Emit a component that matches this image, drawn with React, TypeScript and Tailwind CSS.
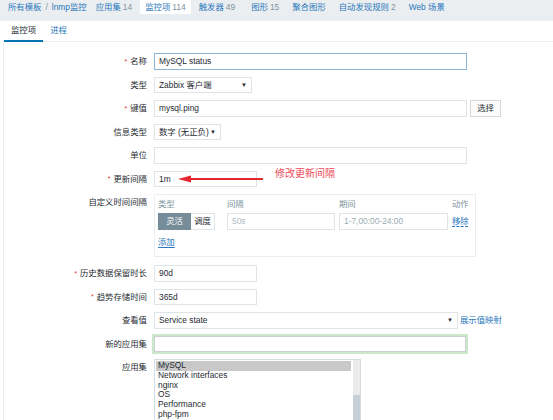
import React from 'react';

const LINK = 'text-[#2a78bd]';
const MUTED = 'text-[#7d939e]';

function Row({
  label,
  req,
  children,
  className = '',
}: {
  label: string;
  req?: boolean;
  children: React.ReactNode;
  className?: string;
}) {
  return (
    <div className={`flex items-start ${className}`}>
      <div className="flex h-[16.5px] w-[143px] shrink-0 items-center justify-end text-[#1f2c33]">
        {req && <span className="mr-[3px] text-[7px] leading-none text-[#e33734]">*</span>}
        <span className="leading-none">{label}</span>
      </div>
      <div className="relative ml-[7px] flex items-start">{children}</div>
    </div>
  );
}

function Input({ value, w, className = '' }: { value?: string; w: string; className?: string }) {
  return (
    <div className={`flex h-[16.5px] items-center border bg-white px-[4px] text-[#1f2c33] ${w} ${className || 'border-[#dfe4e7]'}`}>
      {value}
    </div>
  );
}

function Select({ value, w }: { value: string; w: string }) {
  return (
    <div className={`flex h-[16.5px] items-center justify-between border border-[#dfe4e7] bg-white pl-[4px] pr-[4px] text-[#1f2c33] ${w}`}>
      <span>{value}</span>
      <span className="text-[6px] leading-none text-[#1f2c33]">▼</span>
    </div>
  );
}

export default function App() {
  const navItem = 'flex h-[14px] items-center px-[5px]';
  const apps = ['MySQL', 'Network interfaces', 'nginx', 'OS', 'Performance', 'php-fpm'];

  return (
    <div className="h-[420px] overflow-hidden bg-white font-['Liberation_Sans','Noto_Sans_CJK_SC',sans-serif] text-[8.4px] leading-[14px]">
      {/* top navigation */}
      <div className="flex h-[21px] items-start bg-[#ebeef0] pl-[8px]">
        <div className="flex h-[14px] items-center">
          <span className={LINK}>所有模板</span>
          <span className={`mx-[4px] ${MUTED}`}>/</span>
          <span className={LINK}>lnmp监控</span>
        </div>
        <div className="ml-[4px] flex gap-[3px]">
          <div className={navItem}>
            <span className={LINK}>应用集</span>
            <span className={`ml-[2px] ${MUTED}`}>14</span>
          </div>
          <div className={`${navItem} bg-white`}>
            <span className={LINK}>监控项</span>
            <span className={`ml-[2px] ${MUTED}`}>114</span>
          </div>
          <div className={navItem}>
            <span className={LINK}>触发器</span>
            <span className={`ml-[2px] ${MUTED}`}>49</span>
          </div>
          <div className={`${navItem} ml-[3px]`}>
            <span className={LINK}>图形</span>
            <span className={`ml-[2px] ${MUTED}`}>15</span>
          </div>
          <div className={navItem}>
            <span className={LINK}>聚合图形</span>
          </div>
          <div className={navItem}>
            <span className={LINK}>自动发现规则</span>
            <span className={`ml-[2px] ${MUTED}`}>2</span>
          </div>
          <div className={navItem}>
            <span className={LINK}>Web 场景</span>
          </div>
        </div>
      </div>

      <div className="pl-[3px]">
        {/* tabs */}
        <div className="flex h-[21px] pl-[1px] shadow-[inset_0_-1px_0_#ebeef0]">
          <div className="h-[21px] border-b-2 border-[#0275b8] px-[7px] leading-[19px] text-[#1f2c33]">监控项</div>
          <div className={`h-[21px] px-[7px] leading-[19px] ${LINK}`}>进程</div>
        </div>

        {/* form */}
        <div className="flex flex-col gap-[7px] border-l border-[#ebeef0] pt-[11px]">
          <Row label="名称" req>
            <Input value="MySQL status" w="w-[313px]" className="border-[#8db4d3]" />
          </Row>
          <Row label="类型">
            <Select value="Zabbix 客户端" w="w-[98px]" />
          </Row>
          <Row label="键值" req>
            <Input value="mysql.ping" w="w-[313px]" />
            <button className="ml-[3px] flex h-[16.5px] w-[31px] items-center justify-center border border-[#d3d9dd] bg-[#fbfbfb] text-[#1f2c33]">
              选择
            </button>
          </Row>
          <Row label="信息类型">
            <Select value="数字 (无正负)" w="w-[67px]" />
          </Row>
          <Row label="单位">
            <Input w="w-[313px]" />
          </Row>
          <Row label="更新间隔" req>
            <Input value="1m" w="w-[103px]" />
            <svg className="absolute left-[23px] top-[4px]" width="88" height="8" viewBox="0 0 88 8">
              <line x1="10" y1="4" x2="86" y2="4" stroke="#e4262d" strokeWidth="1.8" />
              <polygon points="1,4 14,0.6 14,7.4" fill="#e4262d" />
            </svg>
            <span className="-mt-[2px] ml-[18px] text-[10px] leading-[10px] text-[#ef4b59]">修改更新间隔</span>
          </Row>
          <Row label="自定义时间间隔" className="mb-[1.5px]">
            <div className="w-[322px] border border-[#ebeef0] bg-white pb-[7.5px] pl-[3px] pt-[3px]">
              <div className={`grid grid-cols-[69px_112px_113px_auto] leading-[12px] ${MUTED}`}>
                <span>类型</span>
                <span>间隔</span>
                <span>期间</span>
                <span>动作</span>
              </div>
              <div className="mt-[3px] grid grid-cols-[69px_112px_113px_auto] items-center">
                <div className="flex h-[16.5px]">
                  <div className="flex w-[33px] items-center justify-center border border-[#768d99] bg-[#768d99] text-white">灵活</div>
                  <div className="flex w-[24px] items-center justify-center border border-l-0 border-[#dfe4e7] bg-white text-[#1f2c33]">调度</div>
                </div>
                <div className="flex h-[16.5px] w-[108px] items-center border border-[#dfe4e7] px-[4px] text-[#acbbc2]">50s</div>
                <div className="flex h-[16.5px] w-[109px] items-center border border-[#dfe4e7] px-[4px] text-[#9aabb3]">1-7,00:00-24:00</div>
                <span className={`underline decoration-dashed underline-offset-2 ${LINK}`}>移除</span>
              </div>
              <div className="mt-[6.5px] leading-[12px]">
                <span className={`underline underline-offset-2 ${LINK}`}>添加</span>
              </div>
            </div>
          </Row>
          <Row label="历史数据保留时长" req>
            <Input value="90d" w="w-[103px]" />
          </Row>
          <Row label="趋势存储时间" req>
            <Input value="365d" w="w-[103px]" />
          </Row>
          <Row label="查看值">
            <Select value="Service state" w="w-[304px]" />
            <span className={`ml-[2px] leading-[16.5px] ${LINK}`}>展示值映射</span>
          </Row>
          <Row label="新的应用集">
            <Input w="w-[312px]" className="border-[#c9d3d7] shadow-[0_0_0_2px_#cbe8cb]" />
          </Row>
          <Row label="应用集">
            <div className="flex h-[66px] w-[207px] border border-b-0 border-[#d5dce0] bg-white">
              <div className="flex flex-1 flex-col pl-[1px] pr-[2px] pt-[1px] text-[#1f2c33]">
                {apps.map((a, i) => (
                  <div key={a} className={`h-[9.8px] pl-[2px] leading-[9.8px] ${i === 0 ? 'bg-[#c8c8c8]' : ''}`}>
                    {a}
                  </div>
                ))}
              </div>
              <div className="flex w-[7px] flex-col">
                <div className="h-[35px] bg-[#ebebeb]" />
                <div className="flex-1 bg-[#c6d0d6]" />
              </div>
            </div>
          </Row>
        </div>
      </div>
    </div>
  );
}
